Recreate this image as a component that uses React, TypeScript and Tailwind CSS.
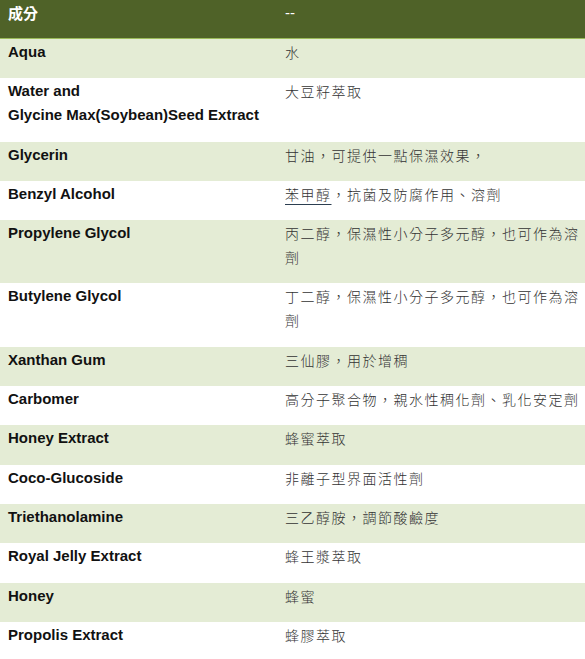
const rows: { name: string[]; desc: string; link?: string }[] = [
  { name: ["Aqua"], desc: "水" },
  { name: ["Water and", "Glycine Max(Soybean)Seed Extract"], desc: "大豆籽萃取" },
  { name: ["Glycerin"], desc: "甘油，可提供一點保濕效果，" },
  { name: ["Benzyl Alcohol"], desc: "，抗菌及防腐作用、溶劑", link: "苯甲醇" },
  { name: ["Propylene Glycol"], desc: "丙二醇，保濕性小分子多元醇，也可作為溶劑" },
  { name: ["Butylene Glycol"], desc: "丁二醇，保濕性小分子多元醇，也可作為溶劑" },
  { name: ["Xanthan Gum"], desc: "三仙膠，用於增稠" },
  { name: ["Carbomer"], desc: "高分子聚合物，親水性稠化劑、乳化安定劑" },
  { name: ["Honey Extract"], desc: "蜂蜜萃取" },
  { name: ["Coco-Glucoside"], desc: "非離子型界面活性劑" },
  { name: ["Triethanolamine"], desc: "三乙醇胺，調節酸鹼度" },
  { name: ["Royal Jelly Extract"], desc: "蜂王漿萃取" },
  { name: ["Honey"], desc: "蜂蜜" },
  { name: ["Propolis Extract"], desc: "蜂膠萃取" },
];

const latin = { fontFamily: '"Liberation Sans", Arial, sans-serif' };
const cjk = { fontFamily: '"Noto Sans CJK TC", "Noto Sans CJK SC", sans-serif' };

export default function App() {
  return (
    <div className="bg-white w-[585px] h-[659px] overflow-hidden">
      <div className="grid grid-cols-[277px_1fr] bg-[#4f6228] border-b border-[#9bbb59] h-[39px]">
        <div className="px-2 pt-[1px] text-[15px] leading-6 font-bold text-white" style={cjk}>
          成分
        </div>
        <div className="px-2 pt-[1px] text-[15px] leading-6 text-white" style={latin}>
          --
        </div>
      </div>
      {rows.map((row, i) => (
        <div
          key={i}
          className={`grid grid-cols-[277px_1fr] pt-[1px] pb-[14.3px] ${i % 2 === 0 ? "bg-[#e4ecd5]" : "bg-white"}`}
        >
          <div className="px-2 text-[15px] leading-6 font-bold text-[#111]" style={latin}>
            {row.name.map((n, j) => (
              <div key={j}>{n}</div>
            ))}
          </div>
          <div
            className="pl-2 pr-1 text-[14px] leading-6 font-light text-[#333] tracking-[1.5px] break-all"
            style={cjk}
          >
            {row.link && (
              <span className="underline decoration-[#2c3e50] underline-offset-4">{row.link}</span>
            )}
            {row.desc}
          </div>
        </div>
      ))}
    </div>
  );
}
